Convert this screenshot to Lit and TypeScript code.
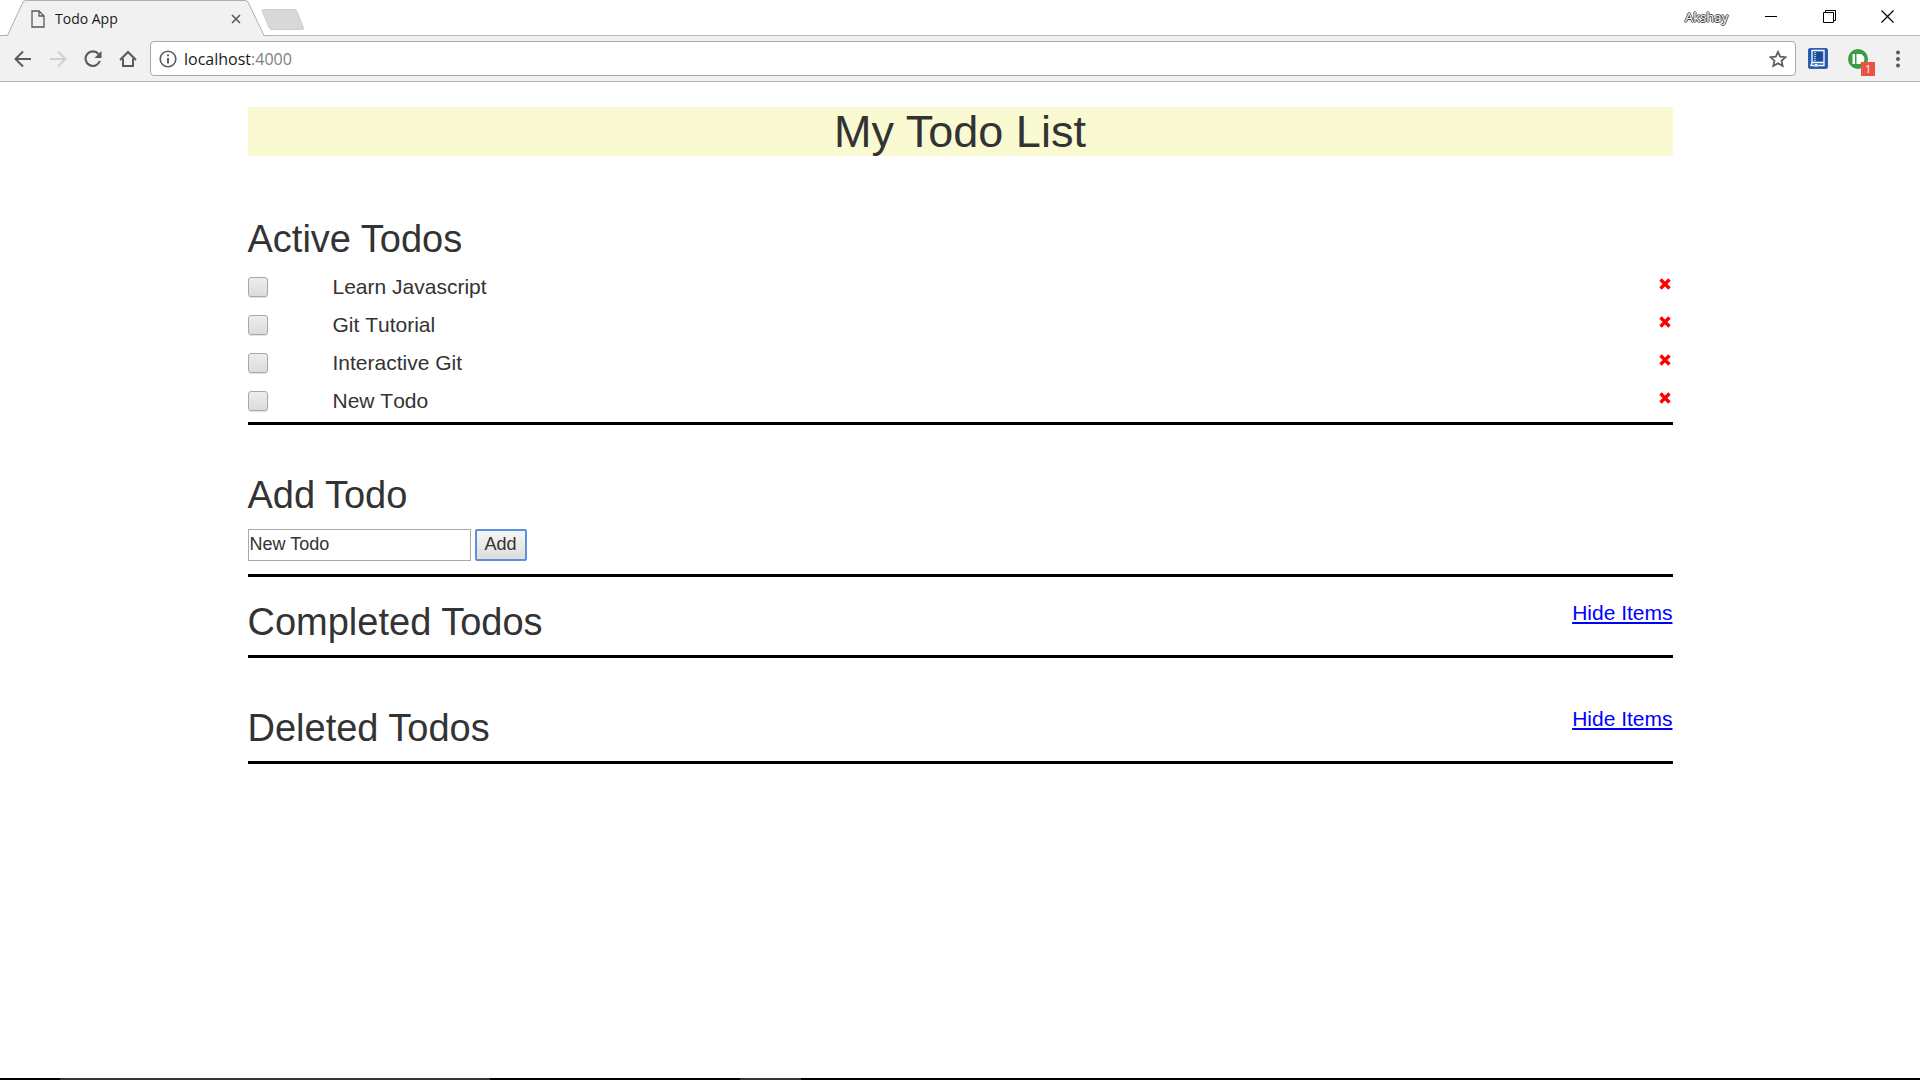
import { LitElement, html, css, svg } from "lit";
import { customElement, property, state } from "lit/decorators.js";

@customElement("browser-bar")
class BrowserBar extends LitElement {
  static styles = css`
    :host {
      display: block;
      font-family: "Open Sans", "Noto Sans", sans-serif;
      color: #1a1a1a;
    }
    button {
      display: grid;
      place-items: center;
      padding: 0;
      border: 0;
      background: none;
      font: inherit;
      color: #5a5a5a;
    }
    svg {
      display: block;
    }
    .tabs {
      display: flex;
      height: 36px;
      box-shadow: inset 0 -1px #b6b4b6;
    }
    .tab {
      position: relative;
      display: flex;
      align-items: center;
      width: 264px;
      height: 36px;
      box-sizing: border-box;
      padding: 2px 19px 0 31px;
    }
    .shape {
      position: absolute;
      inset: 0;
    }
    .tab > * + * {
      position: relative;
    }
    .title {
      flex: 1;
      padding-left: 10px;
      font-size: 14px;
      line-height: 20px;
    }
    .new-tab {
      align-self: flex-start;
      margin: 9px 0 0 -3px;
    }
    .window {
      display: flex;
      align-items: center;
      margin: 0 4px 0 auto;
      height: 33px;
    }
    .user {
      margin-right: 14px;
      font-size: 13px;
      line-height: 20px;
      color: #fff;
      text-shadow: 1px 0 #444, -1px 0 #444, 0 1px #444, 0 -1px #444;
    }
    .window button {
      width: 58px;
      height: 32px;
      color: #000;
    }
    .toolbar {
      display: flex;
      align-items: center;
      height: 45px;
      border-bottom: 1px solid #b6b4b6;
      background: #f2f1f2;
    }
    .nav {
      display: flex;
      padding: 0 4px 0 5px;
    }
    .nav button {
      width: 35px;
      height: 34px;
    }
    .nav button:disabled {
      color: #d0d0d0;
    }
    .address {
      flex: 1;
      display: flex;
      align-items: center;
      height: 33px;
      margin-left: 1px;
      padding: 0 8px;
      border: 1px solid #a9a9a9;
      border-radius: 4px;
      background: #fff;
    }
    .url {
      flex: 1;
      padding-left: 7px;
      font-size: 16px;
      line-height: 24px;
    }
    .port {
      color: #808080;
    }
    .tools {
      display: flex;
      align-items: center;
      padding: 0 2px;
    }
    .tools button {
      width: 40px;
      height: 34px;
    }
    .badged {
      position: relative;
    }
    .badge {
      position: absolute;
      left: 23px;
      top: 20px;
      width: 14px;
      height: 14px;
      background: #e85545;
      color: #fff;
      font-size: 10px;
      line-height: 14px;
      text-align: center;
    }
  `;

  @property() tabTitle = "";

  render() {
    return html`
      <div class="tabs">
        <div class="tab">
          <svg class="shape" width="270" height="36" viewBox="0 0 270 36">
            <path d="M7 36 L23 2 Q24 .5 26 .5 H245 Q247 .5 248 2 L264 36 Z" fill="#f2f1f2" />
            <path d="M0 35.5 H7.500 L23 2 Q24 .5 26 .5 H245 Q247 .5 248 2 L264 35.500 H270" fill="none" stroke="#b0aeb0" />
          </svg>
          <svg width="14" height="18" viewBox="0 0 14 18" fill="none" stroke="#5a5a5a" stroke-width="1.3">
            <path d="M1 1 H8 L13 6 V17 H1 Z M8 1 V6 H13" />
          </svg>
          <span class="title">${this.tabTitle}</span>
          <button aria-label="Close tab">
            <svg width="18" height="18" viewBox="0 0 18 18" stroke="currentColor" stroke-width="1.6">
              <path d="M5 5 L13 13 M13 5 L5 13" />
            </svg>
          </button>
        </div>
        <button class="new-tab" aria-label="New tab">
          <svg width="44" height="22" viewBox="0 0 44 22">
            <path d="M3 .5 H33 Q35 .5 36 2.500 L42.500 19 Q43 20.500 41 20.500 H11 Q9 20.500 8 18.500 L1 2 Q.5 .5 3 .5 Z" fill="#d8d8d8" stroke="#cfcfcf" />
          </svg>
        </button>
        <div class="window">
          <span class="user">Akshay</span>
          <button aria-label="Minimize">
            <svg width="12" height="13" viewBox="0 0 12 13" stroke="currentColor"><path d="M0 6.500 H12" /></svg>
          </button>
          <button aria-label="Restore">
            <svg width="13" height="13" viewBox="0 0 13 13" fill="none" stroke="currentColor">
              <path d="M.5 2.500 H10.500 V12.500 H.5 Z M2.500 2.500 V.5 H12.500 V10.500 H10.500" />
            </svg>
          </button>
          <button aria-label="Close">
            <svg width="13" height="13" viewBox="0 0 13 13" stroke="currentColor" stroke-width="1.2">
              <path d="M.5 .5 L12.500 12.500 M12.500 .5 L.5 12.500" />
            </svg>
          </button>
        </div>
      </div>
      <div class="toolbar">
        <nav class="nav">
          <button aria-label="Back">
            <svg width="18" height="18" viewBox="0 0 18 18" fill="none" stroke="currentColor" stroke-width="2">
              <path d="M17 9 H2 M9 1.500 L1.500 9 L9 16.500" />
            </svg>
          </button>
          <button aria-label="Forward" disabled>
            <svg width="18" height="18" viewBox="0 0 18 18" fill="none" stroke="currentColor" stroke-width="2">
              <path d="M1 9 H16 M9 1.500 L16.500 9 L9 16.500" />
            </svg>
          </button>
          <button aria-label="Reload">
            <svg width="18" height="18" viewBox="0 0 18 18" fill="none" stroke="currentColor" stroke-width="2.100">
              <path d="M14.500 4 A7.300 7.300 0 1 0 15.800 11" />
              <path d="M17.500 1 V8 H10.500 Z" fill="currentColor" stroke="none" />
            </svg>
          </button>
          <button aria-label="Home">
            <svg width="18" height="18" viewBox="0 0 18 18" fill="none" stroke="currentColor" stroke-width="2">
              <path d="M1 10 L9 2 L17 10 M4 8.500 V16 H14 V8.500" />
            </svg>
          </button>
        </nav>
        <div class="address">
          <svg width="18" height="18" viewBox="0 0 18 18" fill="none" stroke="#5a5a5a" stroke-width="1.600">
            <circle cx="9" cy="9" r="7.800" />
            <path d="M9 8 V13.500 M9 4.500 V6.300" stroke-width="2" />
          </svg>
          <span class="url">localhost<span class="port">:4000</span></span>
          <button aria-label="Bookmark this page">
            <svg width="18" height="18" viewBox="0 0 18 18" fill="none" stroke="currentColor" stroke-width="1.700">
              <path d="M9 1.800 L11.200 6.700 L16.600 7.200 L12.500 10.800 L13.700 16.100 L9 13.300 L4.300 16.100 L5.500 10.800 L1.400 7.200 L6.800 6.700 Z" />
            </svg>
          </button>
        </div>
        <div class="tools">
          <button aria-label="Reader extension">
            <svg width="20" height="21" viewBox="0 0 20 21">
              <rect x=".5" y=".5" width="19" height="20" rx="1.500" fill="#2458a8" stroke="#2f62b2" />
              <path d="M4 2.500 H16 V14.500 H4 Z M4 14.500 L3 17.500 H6 M16 14.500 V17.500 H10" fill="none" stroke="#fff" stroke-width="1.300" />
              <path d="M7 4 V13" stroke="#fff" stroke-width="1.200" stroke-dasharray="1 1" />
              <rect x="8.500" y="4" width="6" height="9" fill="#1d4a94" />
              <path d="M6.500 16 H9.500 V19.500 L8 18 L6.500 19.500 Z" fill="#fff" />
            </svg>
          </button>
          <button class="badged" aria-label="Pushbullet, 1 notification">
            <svg width="20" height="20" viewBox="0 0 20 20">
              <circle cx="10" cy="10" r="10" fill="#3c9a41" />
              <path d="M4.500 5 H7 V15 H4.500 Z M8.500 5 H11.500 A5 5 0 0 1 11.500 15 H8.500 Z" fill="#fff" />
            </svg>
            <span class="badge">1</span>
          </button>
          <button aria-label="Menu">
            <svg width="4" height="18" viewBox="0 0 4 18" fill="currentColor">
              <circle cx="2" cy="2.500" r="2" /><circle cx="2" cy="9" r="2" /><circle cx="2" cy="15.500" r="2" />
            </svg>
          </button>
        </div>
      </div>
    `;
  }
}

const crossIcon = svg`<path d="M2.500 2.500 L11.500 11.500 M11.500 2.500 L2.500 11.500" stroke="currentColor" stroke-width="3.400" />`;

@customElement("app-root")
class AppRoot extends LitElement {
  static styles = css`
    :host {
      display: flex;
      flex-direction: column;
      min-height: 100vh;
      background: #fff;
      color: #333;
      font: 21px/30px "Liberation Sans", Arial, sans-serif;
    }
    main {
      flex: 1;
      width: 100%;
      max-width: 1425px;
      box-sizing: border-box;
      margin: 0 auto;
      padding-top: 25px;
    }
    h1,
    h2 {
      margin: 0;
      font-weight: 400;
    }
    h1 {
      margin-bottom: 62px;
      background: #fafad2;
      font-size: 45px;
      line-height: 49px;
      text-align: center;
    }
    h2 {
      font-size: 38px;
      line-height: 43px;
    }
    section {
      margin-bottom: 49px;
      padding-bottom: 11px;
      border-bottom: 3px solid #000;
    }
    .active {
      padding-bottom: 2px;
    }
    .adding {
      margin-bottom: 24px;
      padding-bottom: 13px;
    }
    .todos {
      margin: 7px 0 0;
      padding: 0;
      list-style: none;
      font-kerning: none;
    }
    .todo {
      display: grid;
      grid-template-columns: 85px 1fr auto;
      align-items: center;
      height: 38px;
    }
    .tick {
      appearance: none;
      width: 20px;
      height: 20px;
      margin: 0;
      border: 1px solid #a8a8a8;
      border-radius: 3px;
      background: linear-gradient(#ededed, #dcdcdc);
      box-shadow: 0 1px 1px #e2e2e2;
    }
    .tick:checked {
      background: #777;
    }
    .remove {
      display: grid;
      padding: 0 1px 6px;
      border: 0;
      background: none;
      color: #f00;
    }
    .entry {
      display: flex;
      gap: 4px;
      margin-top: 12px;
    }
    .entry input,
    .entry button {
      box-sizing: border-box;
      height: 32px;
      font: 18px/24px "Liberation Sans", Arial, sans-serif;
      color: #333;
    }
    .entry input {
      width: 223px;
      padding: 0 1px 2px;
      border: 1px solid #a9a9a9;
      outline: 0;
    }
    .entry button {
      padding: 0 8px 2px;
      border: 2px solid #5b8fdf;
      border-radius: 2px;
      background: linear-gradient(#f6f6f6, #dddddd);
    }
    .heading {
      display: flex;
      justify-content: space-between;
      align-items: flex-start;
    }
    a {
      color: #00f;
      line-height: 24px;
      font-kerning: none;
      text-underline-offset: 2px;
      text-decoration-thickness: 2px;
    }
    .taskbar {
      height: 2px;
      background: linear-gradient(
        90deg,
        #000 60px,
        #333 60px 490px,
        #000 490px 740px,
        #333 740px 801px,
        #000 801px
      );
    }
  `;

  @state() private todos = ["Learn Javascript", "Git Tutorial", "Interactive Git", "New Todo"];

  private remove(index: number) {
    this.todos = this.todos.filter((_, i) => i !== index);
  }

  private add(event: Event) {
    event.preventDefault();
    const input = this.renderRoot.querySelector<HTMLInputElement>("#new-todo")!;
    if (input.value.trim()) this.todos = [...this.todos, input.value.trim()];
  }

  private group(title: string) {
    return html`
      <section>
        <div class="heading">
          <h2>${title}</h2>
          <a href="#" aria-label="Hide Items in ${title}">Hide Items</a>
        </div>
      </section>
    `;
  }

  render() {
    return html`
      <browser-bar .tabTitle=${"Todo App"}></browser-bar>
      <main>
        <h1>My Todo List</h1>
        <section class="active">
          <h2>Active Todos</h2>
          <ul class="todos">
            ${this.todos.map(
              (todo, i) => html`
                <li class="todo">
                  <input class="tick" type="checkbox" id="todo-${i}" />
                  <label for="todo-${i}">${todo}</label>
                  <button class="remove" aria-label="Delete ${todo}" @click=${() => this.remove(i)}>
                    <svg width="14" height="14" viewBox="0 0 14 14">${crossIcon}</svg>
                  </button>
                </li>
              `
            )}
          </ul>
        </section>
        <section class="adding">
          <h2><label for="new-todo">Add Todo</label></h2>
          <form class="entry" @submit=${this.add}>
            <input id="new-todo" type="text" value="New Todo" />
            <button type="submit">Add</button>
          </form>
        </section>
        ${this.group("Completed Todos")} ${this.group("Deleted Todos")}
      </main>
      <div class="taskbar"></div>
    `;
  }
}
